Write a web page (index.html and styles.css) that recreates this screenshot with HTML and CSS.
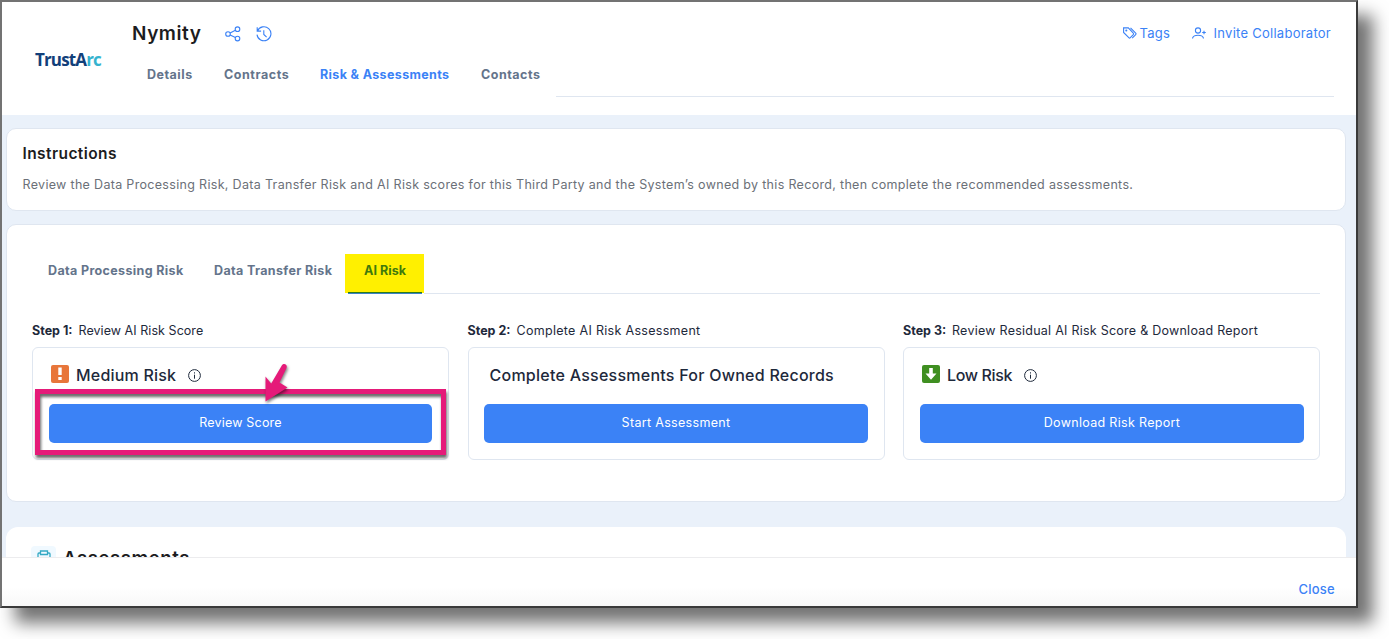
FILE: index.html
```html
<!DOCTYPE html>
<html lang="en">
<head>
<meta charset="utf-8">
<title>Nymity</title>
<link rel="stylesheet" href="styles.css">
</head>
<body>
<div class="window">
  <header class="header">
    <div class="logo"><span class="logo-a">TrustA</span><span class="logo-b">rc</span></div>
    <div class="header-main">
      <div class="title-row">
        <h1 class="title">Nymity</h1>
        <svg class="ic-share" width="16" height="16" viewBox="0 0 16 16"><circle cx="3" cy="8" r="2.3"/><circle cx="12.5" cy="3.2" r="2.3"/><circle cx="12.5" cy="12.6" r="2.3"/><path d="M5.1 7L10.4 4.2M5.1 9l5.3 2.6"/></svg>
        <svg class="ic-history" width="16" height="16" viewBox="0 0 16 16"><path d="M1.2 1.2v3.9h3.9M1.5 5A7 7 0 1 1 1 8.6M7.8 4.2v4.2l2.8 2.8"/></svg>
        <nav class="actions">
          <a class="action tags"><svg width="14" height="12" viewBox="0 0 14 12"><path d="M.6 1v4.5l5.2 5.2c.5.5 1 .5 1.500 0l3-3c.5-.5.5-1 0-1.500L5.300.9H.6zM7.500 .9l5.200 5.200c.5.5.5 1 0 1.500l-3.500 3.500"/><circle cx="3.300" cy="3.500" r=".5"/></svg><span>Tags</span></a>
          <a class="action invite"><svg width="14" height="12" viewBox="0 0 14 12"><circle cx="6" cy="3.500" r="2.600"/><path d="M.6 11.500V11C1.200 9.200 3 8.300 6 8.300s4.800.9 5.400 2.700v.5M12 3.700v3.600M10.200 5.500h3.600"/></svg><span>Invite Collaborator</span></a>
        </nav>
      </div>
      <div class="main-tabs">
        <a class="tab t-details">Details</a><a class="tab t-contracts">Contracts</a><a class="tab t-risk active">Risk &amp; Assessments</a><a class="tab t-contacts">Contacts</a><span class="tab-line"></span>
      </div>
    </div>
  </header>

  <main class="content">
    <section class="card instructions">
      <h2>Instructions</h2>
      <p>Review the Data Processing Risk, Data Transfer Risk and AI Risk scores for this Third Party and the System’s owned by this Record, then complete the recommended assessments.</p>
    </section>

    <section class="card risk">
      <div class="risk-tabs">
        <a class="tab t-processing">Data Processing Risk</a><a class="tab t-transfer">Data Transfer Risk</a><a class="tab t-ai"><span>AI Risk</span></a><span class="risk-line"></span>
      </div>
      <div class="steps">
        <div class="step">
          <div class="step-label s1"><b>Step 1:</b><span>Review AI Risk Score</span></div>
          <div class="box">
            <div class="box-title">
              <svg class="badge" width="18" height="18" viewBox="0 0 18 18"><rect width="18" height="18" rx="2" fill="#e8763a"/><path d="M7.300 2.500h3.400v7.500H7.300zM7.300 12h3.400v3H7.300z" fill="#fff"/></svg>
              <span class="medium">Medium Risk</span>
              <svg class="info" width="13" height="13" viewBox="0 0 13 13"><circle cx="6.500" cy="6.500" r="5.900"/><path d="M6.500 5.700v4M6.500 3.300v1.200"/></svg>
            </div>
            <button class="btn">Review Score</button>
            <div class="callout"></div>
            <svg class="arrow" width="34" height="46" viewBox="0 0 34 46"><path d="M21.500 4C23 .5 28 2 26.500 6L19.500 20.500l8 5L5.500 39.500 5.500 14.500l5.700 7z" fill="#e51a79"/></svg>
          </div>
        </div>
        <div class="step">
          <div class="step-label s2"><b>Step 2:</b><span>Complete AI Risk Assessment</span></div>
          <div class="box box2">
            <div class="box-title plain"><span class="owned">Complete Assessments For Owned Records</span></div>
            <button class="btn wide">Start Assessment</button>
          </div>
        </div>
        <div class="step">
          <div class="step-label s3"><b>Step 3:</b><span>Review Residual AI Risk Score &amp; Download Report</span></div>
          <div class="box box3">
            <div class="box-title">
              <svg class="badge" width="18" height="18" viewBox="0 0 18 18"><rect width="18" height="18" rx="2" fill="#3f8f21"/><path d="M7.200 3h3.600v5.500h3.700L9 14.800 3.500 8.500h3.700z" fill="#fff"/></svg>
              <span class="low">Low Risk</span>
              <svg class="info" width="13" height="13" viewBox="0 0 13 13"><circle cx="6.500" cy="6.500" r="5.900"/><path d="M6.500 5.700v4M6.500 3.300v1.200"/></svg>
            </div>
            <button class="btn wide">Download Risk Report</button>
          </div>
        </div>
      </div>
    </section>

    <section class="assessments">
      <span class="clip"><svg width="14" height="16" viewBox="0 0 14 16"><path d="M3.500 3H2Q1 3 1 4v11h12V4q0-1-1-1h-1.500M3.500 1h7v3.500h-7z"/></svg></span>
      <h2>Assessments</h2>
    </section>
  </main>

  <footer class="footer"><a>Close</a></footer>
</div>
</body>
</html>
```
FILE: styles.css
```css
* { box-sizing: border-box; }
body { margin: 0; height: 639px; background: #fff; overflow: hidden; font-family: Inter, "Liberation Sans", sans-serif; font-size: 13px; color: #1e293b; }
h1, h2, p { margin: 0; }
svg { flex: none; }
.window { display: flex; flex-direction: column; width: 1358px; height: 608px; border: 2px solid; border-color: #737373 #3a3a3a #3a3a3a #737373; background: #fff; box-shadow: 15px 15px 16px rgba(0, 0, 0, .55); }

.header { display: flex; height: 113px; flex: none; }
.logo { width: 128px; padding: 46px 0 0 33px; font: 700 17px/24px "Open Sans", sans-serif; letter-spacing: -.85px; }
.logo-a { color: #12407a; }
.logo-b { color: #35b3cf; }
.header-main { flex: 1; padding: 18px 22px 0 2px; }
.title-row { display: flex; align-items: center; height: 27px; }
.title { width: 93px; font-size: 19px; line-height: 27px; font-weight: 600; color: #1c1c1e; letter-spacing: .55px; }
.title-row svg { fill: none; stroke: #3b82f6; stroke-width: 1.100; }
.ic-history { margin-left: 15px; }
.actions { display: flex; margin-left: auto; padding-right: 3px; }
.action { display: flex; align-items: center; color: #3b82f6; font-size: 13px; line-height: 16px; padding-bottom: 1px; }
.tags { width: 69px; letter-spacing: .2px; }
.tags svg { margin-right: 3px; }
.invite { letter-spacing: .26px; }
.invite svg { margin-right: 8px; }
.main-tabs { display: flex; height: 50px; }
.tab { flex: none; font-weight: 700; font-size: 12.500px; line-height: 18px; color: #64748b; white-space: nowrap; letter-spacing: .36px; }
.main-tabs .tab { padding-top: 19px; }
.main-tabs .t-details { width: 92px; padding-left: 15px; letter-spacing: .5px; }
.main-tabs .t-contracts { width: 96px; letter-spacing: .55px; }
.t-risk { width: 161px; }
.main-tabs .t-contacts { width: 75px; letter-spacing: .5px; }
.main-tabs .active { color: #3b82f6; }
.tab-line { flex: 1; border-bottom: 1px solid #dfe6f0; }

.content { flex: 1; min-height: 0; overflow: hidden; padding: 13px 10px 0 4px; background: #eaf1fa; }
.card { border: 1px solid #dfe6f0; border-radius: 10px; background: #fff; }
.instructions { height: 83px; padding: 14px 15.500px; margin-bottom: 13px; }
.instructions h2 { font-size: 15.500px; line-height: 22px; font-weight: 600; color: #1c1c1e; letter-spacing: .42px; }
.instructions p { margin-top: 11px; font-size: 12.500px; line-height: 18px; color: #6b7078; white-space: nowrap; letter-spacing: .318px; }
.risk { height: 278px; padding: 29px 25px 0; margin-bottom: 25px; }
.risk-tabs { display: flex; height: 40px; }
.risk-tabs .tab { padding-top: 8px; border-bottom: 1px solid transparent; }
.t-processing { width: 182px; padding-left: 16px; }
.t-transfer { width: 131px; }
.risk-tabs .t-ai { position: relative; width: 79px; padding-left: 19px; background: linear-gradient(#fff000, #fff000) 0 0 / 100% 39px no-repeat; color: #3f7a0c; letter-spacing: .05px; }
.t-ai::after { content: ""; position: absolute; left: 3px; right: 2px; bottom: -1px; height: 2px; background: linear-gradient(#2f7a1c 50%, #3b82c6 50%); }
.risk-line { flex: 1; border-bottom: 1px solid #dfe6f0; }
.steps { display: grid; grid-template-columns: repeat(3, 417px); justify-content: space-between; padding-top: 27px; }
.step-label { display: flex; height: 26px; line-height: 20px; font-size: 12.500px; white-space: nowrap; }
.step-label b { width: 49px; font-weight: 700; }
.s1 b { width: 46.500px; }
.s1 span { letter-spacing: .05px; }
.s2 span { letter-spacing: .3px; }
.s3 span { letter-spacing: .25px; }
.box { position: relative; height: 113px; border: 1px solid #dfe6f0; border-radius: 6px; padding: 14px 16px 0; }
.box2 { padding-left: 15.500px; padding-right: 15.500px; }
.box3 { padding-right: 15px; }
.box-title { display: flex; align-items: center; height: 27px; margin-bottom: 15px; padding-left: 2px; font-size: 16px; line-height: 20px; font-weight: 500; white-space: nowrap; }
.box-title span { padding-bottom: 1px; }
.badge { margin: -4px 7px 0 0; }
.box-title .info { margin-left: 12px; fill: none; stroke: #1e293b; stroke-width: 1; }
.box-title.plain { padding-left: 5.500px; }
.medium { letter-spacing: .2px; }
.owned { letter-spacing: .25px; }
.low { letter-spacing: -.35px; }
.btn { display: block; width: 100%; height: 39px; border: 0; border-radius: 5px; padding: 0 0 2px; background: #3b82f6; color: #fff; font: 400 12.500px Inter, sans-serif; letter-spacing: .2px; }
.wide { letter-spacing: .32px; }
.callout { position: absolute; left: 2px; top: 41px; width: 411px; height: 66px; border: 5px solid #e51a79; filter: drop-shadow(1px 3px 1.500px rgba(0, 0, 0, .6)); }
.arrow { position: absolute; left: 227px; top: 14px; filter: drop-shadow(1px 2px 1.500px rgba(0, 0, 0, .5)); }
.assessments { display: flex; height: 80px; border-radius: 12px; background: #fff; padding: 19px 25px; }
.assessments h2 { margin-left: 7px; font-size: 18.500px; line-height: 24px; font-weight: 600; color: #1c1c1e; letter-spacing: .6px; }
.clip { width: 25px; height: 25px; border-radius: 4px; background: #f0f9ff; padding: 4px 6px; }
.clip svg { display: block; fill: none; stroke: #35a9c4; stroke-width: 1.300; }
.footer { flex: none; height: 49px; border-top: 1px solid #ececee; background: linear-gradient(#fff 60%, #f8f8f8); display: flex; justify-content: flex-end; padding: 21px 21px 0 0; font-weight: 500; font-size: 13px; line-height: 20px; color: #3b82f6; letter-spacing: .25px; }
```
